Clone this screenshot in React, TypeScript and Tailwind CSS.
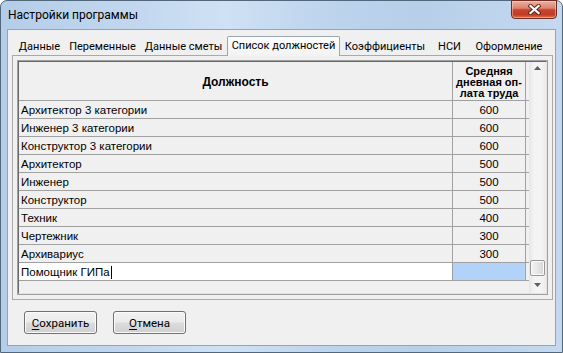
import React from "react";

const rows: [string, string][] = [
  ["Архитектор 3 категории", "600"],
  ["Инженер 3 категории", "600"],
  ["Конструктор 3 категории", "600"],
  ["Архитектор", "500"],
  ["Инженер", "500"],
  ["Конструктор", "500"],
  ["Техник", "400"],
  ["Чертежник", "300"],
  ["Архивариус", "300"],
];

const tabs: { label: string; w: string; active?: boolean }[] = [
  { label: "Данные", w: "w-[51px]" },
  { label: "Переменные", w: "w-[75px]" },
  { label: "Данные сметы", w: "w-[87px]" },
  { label: "Список должностей", w: "w-[113px]", active: true },
  { label: "Коэффициенты", w: "w-[90px]" },
  { label: "НСИ", w: "w-[39px]" },
  { label: "Оформление", w: "w-[80px]" },
];

const ui = { fontFamily: 'Roboto, "Noto Sans", sans-serif' };
const grid = { fontFamily: '"Liberation Sans", Arial, sans-serif' };

function CloseGlyph() {
  return (
    <svg width="13" height="11" viewBox="0 0 13 11">
      <path d="M2.5 2 L10.5 9 M10.5 2 L2.5 9" stroke="#5a2418" strokeWidth="4" strokeLinecap="square" />
      <path d="M2.5 2 L10.5 9 M10.5 2 L2.5 9" stroke="#ffffff" strokeWidth="2.3" strokeLinecap="square" />
    </svg>
  );
}

function Arrow({ down }: { down?: boolean }) {
  return (
    <svg width="7" height="4" viewBox="0 0 7 4">
      {down ? <path d="M0 0 H7 L3.5 4 Z" fill="#5f5f5f" /> : <path d="M0 4 H7 L3.5 0 Z" fill="#5f5f5f" />}
    </svg>
  );
}

function Btn({ first, rest }: { first: string; rest: string }) {
  return (
    <button
      className="w-[73px] h-[23px] rounded-[3px] border border-[#707070] bg-[linear-gradient(to_bottom,#f2f2f2_0%,#ebebeb_48%,#dddddd_52%,#cfcfcf_100%)] shadow-[inset_0_0_0_1px_#fbfbfb] text-[11.5px] leading-[16px] text-black flex items-center justify-center whitespace-nowrap"
      style={ui}
    >
      <span className="underline underline-offset-2">{first}</span>
      {rest}
    </button>
  );
}

export default function App() {
  return (
    <div className="w-[563px] h-[353px] overflow-hidden bg-white">
      <div className="w-[563px] h-[353px] rounded-t-[7px] border border-[#52667c] bg-[linear-gradient(to_right,#b4cde8_0%,#c3d8ef_25%,#cfe1f4_40%,#bcd3ec_60%,#b7cfe9_75%,#c4d9ef_100%)] flex flex-col">
        <div className="h-[28px] flex justify-between items-start pr-[5px]">
          <div className="pl-[7px] pt-[6px] text-[12px] leading-[16px] text-black whitespace-nowrap" style={ui}>
            Настройки программы
          </div>
          <div className="w-[46px] h-[19px] -mt-px rounded-b-[4px] border border-[#6f2d22] bg-[linear-gradient(to_bottom,#eab0a2_0%,#dc8470_42%,#c6452d_52%,#c23b25_80%,#d8724f_100%)] shadow-[inset_0_0_0_1px_rgba(255,220,210,0.45)] flex items-center justify-center">
            <CloseGlyph />
          </div>
        </div>
        <div className="mx-[6px] h-[317px] border border-[#8fa5bd] bg-[#f0f0f0] flex flex-col">
          {/* tab strip */}
          <div className="h-[25px] ml-[6px] flex items-end whitespace-nowrap" style={ui}>
            {tabs.map((t) =>
              t.active ? (
                <div
                  key={t.label}
                  className={`${t.w} h-[20px] -mb-px relative z-10 rounded-t-[2px] border-x border-t border-[#9aa6b5] bg-[linear-gradient(to_bottom,#fdfdfd,#f3f3f3)] flex items-center justify-center text-[11px] leading-[16px] text-black pb-[2px]`}
                >
                  {t.label}
                </div>
              ) : (
                <div
                  key={t.label}
                  className={`${t.w} h-[17px] flex items-center justify-center text-[11px] leading-[16px] text-black`}
                >
                  {t.label}
                </div>
              )
            )}
          </div>
          {/* panel */}
          <div className="ml-[4px] w-[541px] h-[245px] border border-[#a9a9a9] p-[4px] flex">
            <div className="w-[531px] h-[235px] border border-[#a0a0a0] flex">
              <div className="flex-1 border border-t-[#696969] border-l-[#696969] border-r-[#e3e3e3] border-b-[#e3e3e3] flex" style={grid}>
                <div className="w-[510px] flex flex-col">
                  <div className="h-[39px] flex border-b border-[#a0a0a0] font-bold text-black">
                    <div className="w-[434px] border-r border-[#a0a0a0] flex items-center justify-center text-[12px] pt-[1px]">
                      Должность
                    </div>
                    <div className="w-[73px] border-r border-[#a0a0a0] flex flex-col items-center justify-center text-[11px] leading-[11px] pt-[2px]">
                      <span>Средняя</span>
                      <span>дневная оп-</span>
                      <span>лата труда</span>
                    </div>
                  </div>
                  {rows.map(([n, v]) => (
                    <div key={n} className="h-[18px] flex border-b border-[#a0a0a0] text-[11.5px] text-black">
                      <div className="w-[434px] border-r border-[#a0a0a0] pl-[2px] flex items-center pt-[2px]">{n}</div>
                      <div className="w-[73px] border-r border-[#a0a0a0] flex items-center justify-center pt-[2px]">{v}</div>
                    </div>
                  ))}
                  <div className="h-[18px] flex border-b border-[#a0a0a0] text-[11.5px] text-black">
                    <div className="w-[434px] border-r border-[#a0a0a0] bg-white pl-[2px] flex items-center pt-[2px]">
                      Помощник ГИПа
                      <span className="inline-block w-px h-[13px] bg-black ml-px"></span>
                    </div>
                    <div className="w-[73px] border-r border-[#a0a0a0] bg-[#b1d3f8]"></div>
                  </div>
                </div>
                {/* scrollbar */}
                <div className="w-[17px] ml-auto flex flex-col bg-[linear-gradient(to_right,#e6e6e6,#f4f4f4_30%,#f4f4f4_70%,#ececec)]">
                  <div className="h-[17px] flex items-start justify-center pt-[4px]">
                    <Arrow />
                  </div>
                  <div className="flex-1"></div>
                  <div className="h-[16px] mx-[1px] rounded-[2px] border border-[#979797] bg-[linear-gradient(to_right,#f4f4f4,#e6e6e6_50%,#d6d6d6)] shadow-[inset_0_0_0_1px_#fbfbfb]"></div>
                  <div className="h-[17px] flex items-center justify-center">
                    <Arrow down />
                  </div>
                </div>
              </div>
            </div>
          </div>
          {/* buttons */}
          <div className="flex gap-[16px] pl-[16px] pt-[11px]">
            <Btn first="С" rest="охранить" />
            <Btn first="О" rest="тмена" />
          </div>
        </div>
      </div>
    </div>
  );
}
